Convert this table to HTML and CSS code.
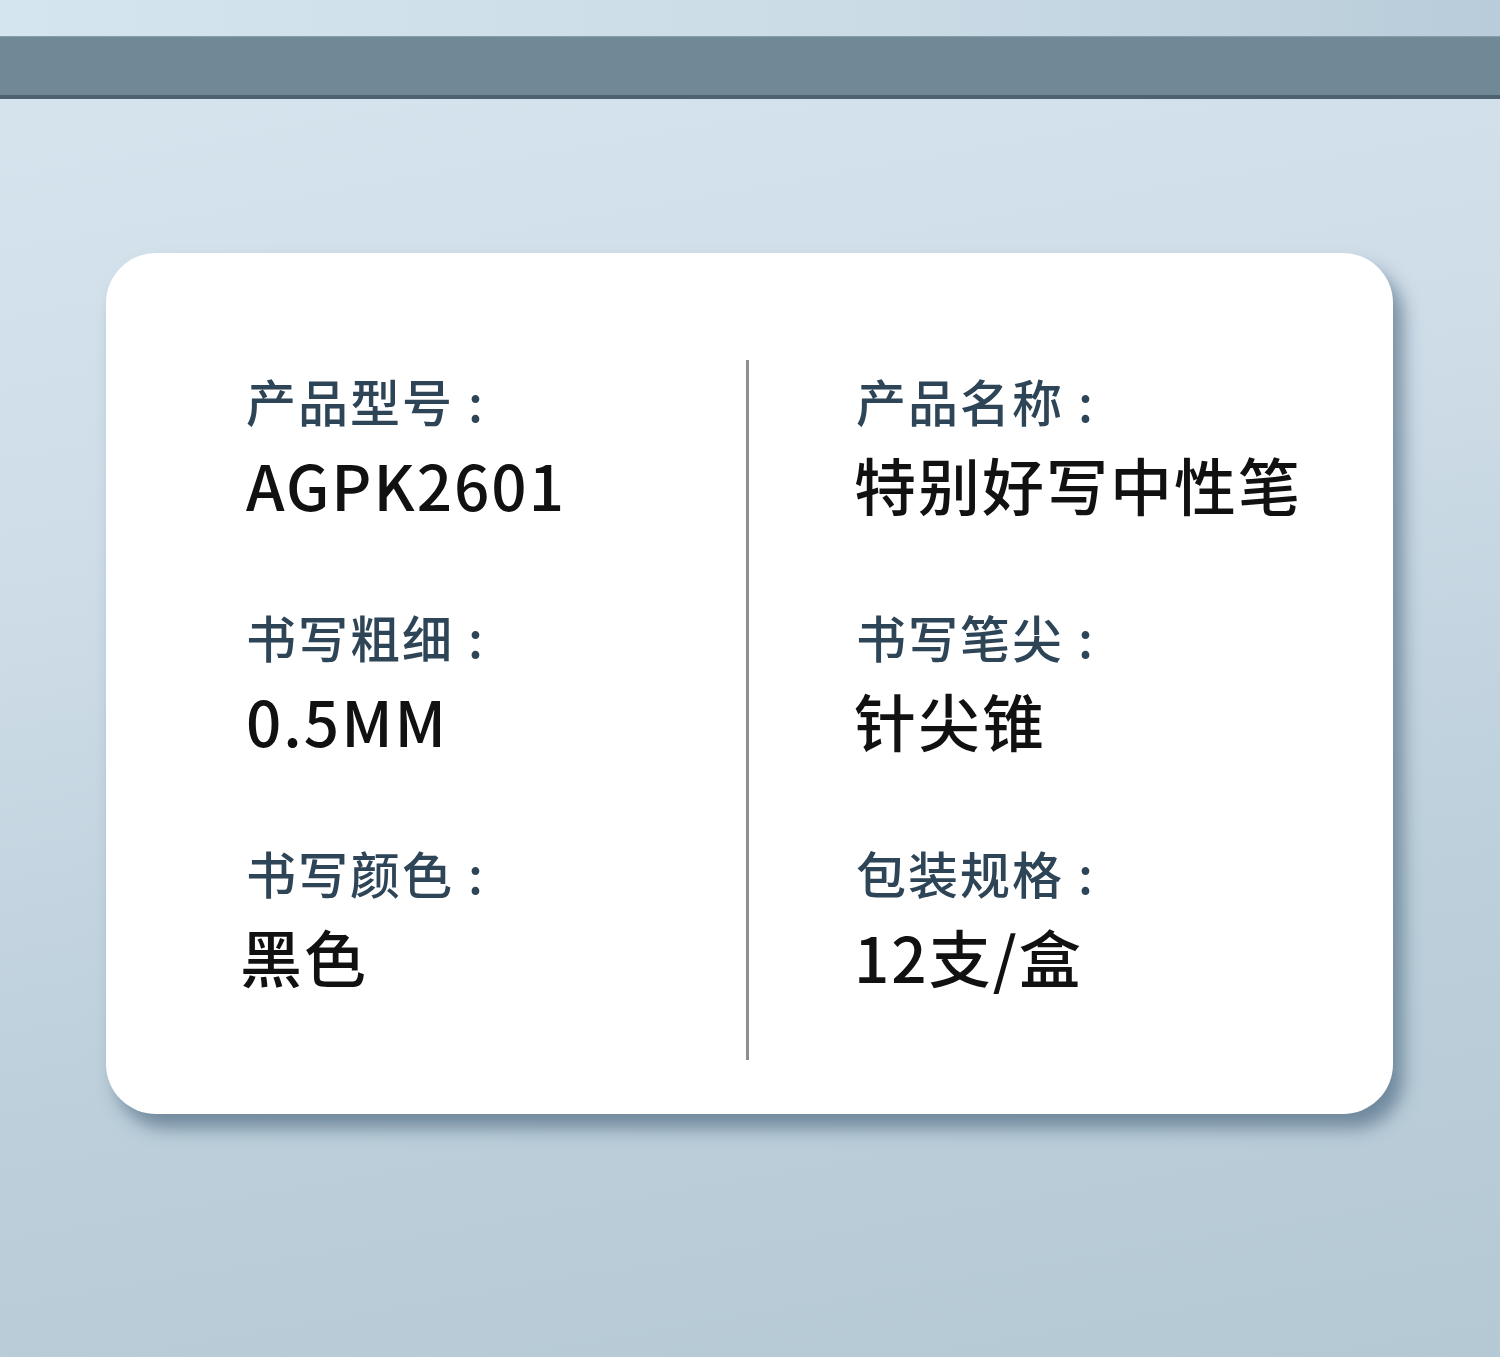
FILE: index.html
```html
<!DOCTYPE html>
<html lang="zh-CN">
<head>
    <meta charset="UTF-8">
    <meta name="viewport" content="width=device-width, initial-scale=1.0">
    <title>产品参数</title>
    <link rel="stylesheet" href="styles.css">
</head>
<body>
    <div class="top-band"></div>
    <div class="top-bar"></div>

    <div class="card">
        <div class="col col-left">
            <div class="item">
                <div class="label">产品型号<span class="colon">:</span></div>
                <div class="value">AGPK2601</div>
            </div>
            <div class="item">
                <div class="label">书写粗细<span class="colon">:</span></div>
                <div class="value">0.5MM</div>
            </div>
            <div class="item">
                <div class="label">书写颜色<span class="colon">:</span></div>
                <div class="value value-shift">黑色</div>
            </div>
        </div>
        <div class="divider"></div>
        <div class="col col-right">
            <div class="item">
                <div class="label">产品名称<span class="colon">:</span></div>
                <div class="value">特别好写中性笔</div>
            </div>
            <div class="item">
                <div class="label">书写笔尖<span class="colon">:</span></div>
                <div class="value">针尖锥</div>
            </div>
            <div class="item">
                <div class="label">包装规格<span class="colon">:</span></div>
                <div class="value">12支/盒</div>
            </div>
        </div>
    </div>
</body>
</html>
```

FILE: styles.css
```css
body {
    margin: 0;
    padding: 0;
    height: 1357px;
    overflow: hidden;
    font-family: "Noto Sans CJK SC", "Noto Sans", sans-serif;
    background: linear-gradient(170deg, #d7e5ef 0%, #cfdde8 35%, #bccfdb 70%, #b5c9d5 100%);
}

.top-band {
    height: 36px;
    background: linear-gradient(90deg, #d5e5ef 0%, #cadbe6 60%, #b8ccd9 100%);
}

.top-bar {
    height: 58px;
    background-color: #718896;
    border-top: 1px solid #8a9ea9;
    border-bottom: 4px solid #4d6271;
}

.card {
    width: 1287px;
    height: 861px;
    box-sizing: border-box;
    margin: 154px 0 0 106px;
    padding: 107px 0 54px 140px;
    background-color: #fff;
    border-radius: 50px;
    box-shadow: 10px 14px 18px rgba(72, 100, 124, 0.65);
    display: grid;
    grid-template-columns: 500px 3px 1fr;
}

.col {
    padding-top: 10px;
}

.col-right {
    padding-left: 105px;
}

.divider {
    background-color: #8e8e8e;
}

.item {
    margin-bottom: 82px;
}

.item:last-child {
    margin-bottom: 0;
}

.label {
    font-size: 50px;
    font-weight: 500;
    line-height: 60px;
    letter-spacing: 2px;
    color: #2e4557;
    margin-bottom: 14px;
}

.colon {
    margin-left: 14px;
}

.value {
    font-size: 62px;
    font-weight: 500;
    line-height: 80px;
    letter-spacing: 2px;
    color: #111;
}

.col-right .label {
    margin-left: 2px;
}

.value-shift {
    margin-left: -6px;
}
```
